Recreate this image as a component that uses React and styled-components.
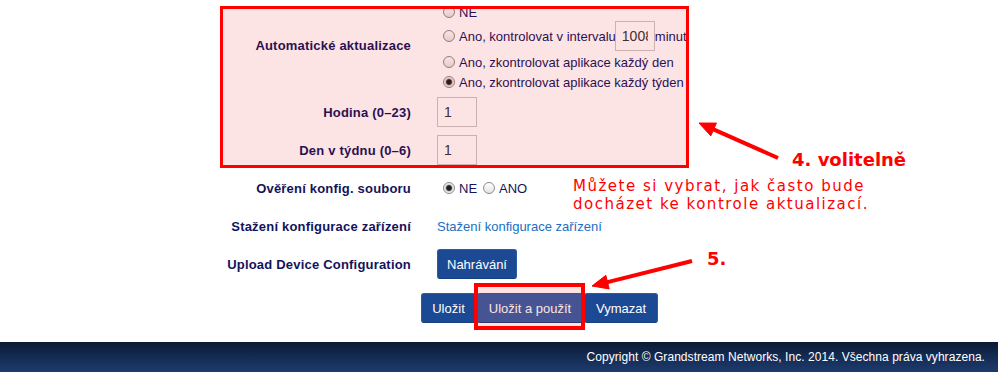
import React from "react";
import styled, { createGlobalStyle } from "styled-components";

const Global = createGlobalStyle`
  html, body { margin: 0; padding: 0; background: #fff; }
  body { font-family: "Liberation Sans", Arial, sans-serif; overflow: hidden; }
`;

const Page = styled.div`
  position: relative;
  width: 998px;
  height: 372px;
  display: flex;
  flex-direction: column;
  overflow: hidden;
`;

const Main = styled.main`
  flex: 1;
  padding-top: 2px;
`;

const Form = styled.div`
  display: grid;
  grid-template-columns: 411px max-content;
  column-gap: 26px;
  row-gap: 8px;
  align-items: center;
`;

const Label = styled.div`
  text-align: right;
  font-weight: bold;
  font-size: 13px;
  letter-spacing: 0.2px;
  color: #13135c;
`;

const Value = styled.div`
  display: flex;
  align-items: center;
  height: 30px;
  font-size: 13px;
  color: #13135c;
`;

const OptionStack = styled.div`
  display: flex;
  flex-direction: column;
  margin-bottom: -3px;
`;

const Option = styled.label`
  display: flex;
  align-items: center;
  height: ${(p) => (p.$tall ? "30px" : "20px")};
  margin-top: ${(p) => p.$shift || 0}px;
  font-size: 13px;
  color: #13135c;
  white-space: nowrap;
`;

const Radio = styled.input.attrs({ type: "radio" })`
  appearance: none;
  -webkit-appearance: none;
  box-sizing: border-box;
  width: 12px;
  height: 12px;
  margin: 0 4px 0 6px;
  border: 1px solid #8c8c8c;
  border-radius: 50%;
  background: linear-gradient(#ffffff, #e4e4e4);
  flex: none;
  &:checked {
    background: radial-gradient(circle at center, #1e1e1e 0 2px, #4a4a4a 2.6px, #d6d6d6 3.6px, #f4f4f4 5px);
  }
`;

const TextInput = styled.input.attrs({ type: "text" })`
  box-sizing: border-box;
  width: 40px;
  height: 30px;
  margin: ${(p) => (p.$inline ? "0 0 0 -1px" : "0")};
  padding: 0 6px;
  border: 1px solid #cbc6c6;
  background: #fff;
  font-family: "Liberation Sans", Arial, sans-serif;
  font-size: 14px;
  color: #333;
  outline: none;
`;

const Link = styled.a`
  color: #1b6ec2;
  font-size: 13px;
  text-decoration: none;
`;

const Button = styled.button`
  box-sizing: border-box;
  width: ${(p) => p.$w}px;
  height: 30px;
  padding: 0;
  border: 1px solid #2b5aa6;
  border-bottom-color: #173f80;
  border-radius: 3px;
  background: ${(p) => (p.$active ? "#355fa5" : "#1c4993")};
  color: #fff;
  font-family: "Liberation Sans", Arial, sans-serif;
  font-size: 13px;
  text-align: center;
  cursor: pointer;
`;

const Actions = styled.div`
  display: flex;
  gap: 1px;
  margin-top: 14px;
  padding-left: 421px;
`;

const Footer = styled.footer`
  height: 30px;
  display: flex;
  align-items: center;
  justify-content: flex-end;
  padding-right: 13px;
  background: linear-gradient(#0a1a32, #142c54 50%, #1e3b6c);
  color: #fff;
  font-size: 12px;
  letter-spacing: 0.05px;
`;

const Highlight = styled.div`
  position: absolute;
  box-sizing: border-box;
  left: ${(p) => p.$x}px;
  top: ${(p) => p.$y}px;
  width: ${(p) => p.$w}px;
  height: ${(p) => p.$h}px;
  border: ${(p) => p.$b}px solid #ff0000;
  background: rgba(230, 0, 0, 0.105);
  pointer-events: none;
`;

const Note = styled.div`
  position: absolute;
  left: ${(p) => p.$x}px;
  top: ${(p) => p.$y}px;
  color: #ff0000;
  font-family: "DejaVu Sans", Verdana, sans-serif;
  font-size: ${(p) => (p.$big ? "18px" : "15px")};
  font-weight: ${(p) => (p.$big ? "bold" : "normal")};
  letter-spacing: ${(p) => (p.$big ? "0" : "1.5px")};
  line-height: 18px;
  white-space: nowrap;
  pointer-events: none;
`;

const Arrows = styled.svg`
  position: absolute;
  left: 0;
  top: 0;
  pointer-events: none;
`;

function Arrow({ x1, y1, x2, y2 }) {
  const dx = x2 - x1;
  const dy = y2 - y1;
  const len = Math.hypot(dx, dy);
  const ux = dx / len;
  const uy = dy / len;
  const bx = x2 - 16 * ux;
  const by = y2 - 16 * uy;
  const px = -uy * 7;
  const py = ux * 7;
  return (
    <g fill="#ff0000" stroke="#ff0000">
      <line x1={x1} y1={y1} x2={bx + ux * 2} y2={by + uy * 2} strokeWidth="4" />
      <polygon
        points={`${x2},${y2} ${bx + px},${by + py} ${bx - px},${by - py}`}
        strokeWidth="1"
        strokeLinejoin="round"
      />
    </g>
  );
}

export default function App() {
  return (
    <>
      <Global />
      <Page>
        <Main>
          <Form>
            <Label>Automatické aktualizace</Label>
            <OptionStack>
              <Option>
                <Radio name="auto" />
                NE
              </Option>
              <Option $tall $shift={-1}>
                <Radio name="auto" />
                Ano, kontrolovat v intervalu
                <TextInput $inline defaultValue="10080" />
                minut
              </Option>
              <Option $shift={1}>
                <Radio name="auto" />
                Ano, zkontrolovat aplikace každý den
              </Option>
              <Option>
                <Radio name="auto" defaultChecked />
                Ano, zkontrolovat aplikace každý týden
              </Option>
            </OptionStack>

            <Label>Hodina (0–23)</Label>
            <Value>
              <TextInput defaultValue="1" />
            </Value>

            <Label>Den v týdnu (0–6)</Label>
            <Value>
              <TextInput defaultValue="1" />
            </Value>

            <Label>Ověření konfig. souboru</Label>
            <Value>
              <Option>
                <Radio name="verify" defaultChecked />
                NE
              </Option>
              <Option>
                <Radio name="verify" />
                ANO
              </Option>
            </Value>

            <Label>Stažení konfigurace zařízení</Label>
            <Value>
              <Link href="#">Stažení konfigurace zařízení</Link>
            </Value>

            <Label>Upload Device Configuration</Label>
            <Value>
              <Button $w={80}>Nahrávání</Button>
            </Value>
          </Form>
          <Actions>
            <Button $w={55}>Uložit</Button>
            <Button $w={106} $active>Uložit a použít</Button>
            <Button $w={74}>Vymazat</Button>
          </Actions>
        </Main>
        <Footer>Copyright © Grandstream Networks, Inc. 2014. Všechna práva vyhrazena.</Footer>

        <Highlight $x={220} $y={6} $w={469} $h={162} $b={3} />
        <Highlight $x={474} $y={283} $w={111} $h={47} $b={4} />
        <Note $x={573} $y={177}>
          Můžete si vybrat, jak často bude
          <br />
          docházet ke kontrole aktualizací.
        </Note>
        <Note $x={792} $y={151} $big>
          4. volitelně
        </Note>
        <Note $x={707} $y={250} $big>
          5.
        </Note>
        <Arrows width="998" height="342" viewBox="0 0 998 342">
          <Arrow x1={778} y1={158} x2={699} y2={123} />
          <Arrow x1={692} y1={261} x2={592} y2={286} />
        </Arrows>
      </Page>
    </>
  );
}
